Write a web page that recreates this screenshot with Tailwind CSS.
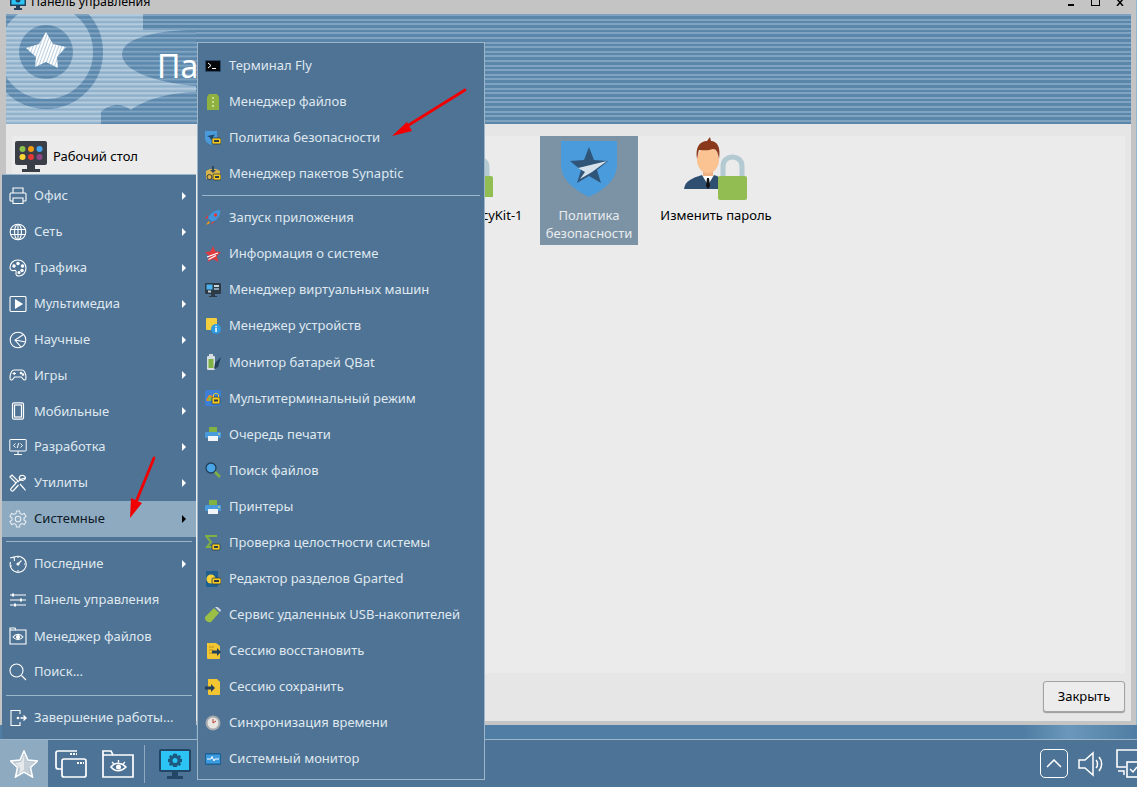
<!DOCTYPE html>
<html lang="ru">
<head>
<meta charset="UTF-8">
<title>Панель управления</title>
<script src="https://cdn.jsdelivr.net/npm/@tailwindcss/browser@4"></script>
</head>
<body class="m-0 overflow-hidden">
<div class="relative w-[1137px] h-[787px] overflow-hidden flex flex-col font-['Noto_Sans',sans-serif] text-[13px] bg-[#4f7da3]">

  <!-- window -->
  <div class="h-[725px] bg-[#c4c4c4] flex flex-col pl-[6px] pr-[5px] pb-[4px] border-r border-[#8fb4cf]">
    <div class="h-[14px] relative -ml-[6px] flex items-end overflow-hidden">
      <div class="flex items-center h-[18px] pl-[10px] gap-[5px] text-[12.4px] text-black leading-[18px] mb-[3px]">
        <svg width="16" height="16" viewBox="0 0 16 16"><rect x="0" y="0" width="16" height="12" fill="#23405c"/><rect x="1.5" y="1.5" width="13" height="9" fill="#2cc3f5"/><circle cx="8" cy="6" r="2.5" fill="#23405c"/><rect x="6" y="12" width="4" height="2" fill="#23405c"/><rect x="4" y="14" width="8" height="2" fill="#23405c"/></svg>
        <span>Панель управления</span>
      </div>
      <div class="ml-auto flex items-end pr-[7px] mb-[8px]">
        <div class="w-[6px] h-[2px] bg-black"></div>
        <div class="w-[9px] h-[9px] border border-black ml-[17px]"></div>
        <svg width="8" height="7" viewBox="0 0 8 7" class="ml-[16px]"><path d="M1 0L7 7M7 0L1 7" stroke="#000" stroke-width="1.5"/></svg>
      </div>
    </div>

    <div class="relative h-[110px] overflow-hidden bg-[repeating-linear-gradient(to_bottom,#7fa3c1_0,#7fa3c1_2px,#5a86a9_2px,#5a86a9_4.6px)]">
      <svg class="absolute inset-0" width="500" height="110" viewBox="0 0 500 110">
        <defs>
          <pattern id="lt" width="4" height="4.6" patternUnits="userSpaceOnUse"><rect width="4" height="4.6" fill="#8fb0cb"/><rect width="4" height="2.2" fill="#b4cbdd"/></pattern>
          <pattern id="dk" width="4" height="4.6" patternUnits="userSpaceOnUse"><rect width="4" height="4.6" fill="#5a87ab"/><rect width="4" height="2" fill="#7fa3c1"/></pattern>
          <pattern id="wh" width="3" height="3" patternUnits="userSpaceOnUse" patternTransform="rotate(20)"><rect width="3" height="3" fill="#fff"/><rect width="0.8" height="3" fill="#a9c3d8"/></pattern>
        </defs>
        <path d="M0 0H137V16H190V110H0Z" fill="url(#lt)"/>
        <circle cx="40" cy="38" r="52" fill="none" stroke="url(#dk)" stroke-width="10"/>
        <circle cx="40" cy="38" r="27" fill="url(#dk)"/>
        <path d="M190 16C145 16 116 26 116 40C116 56 145 68 190 72Z" fill="url(#dk)"/>
        <path d="M95 110V98C105 88 118 90 125 96C140 84 170 78 190 78V110Z" fill="url(#dk)"/>
        <path d="M40 18L47 30L60 33L51 43L52 54L40 48L29 53L30 43L20 34L33 30Z" fill="url(#wh)"/>
      </svg>
      <div class="absolute left-[151px] top-[30px] text-[32px] leading-[44px] text-white">Панель управления</div>
    </div>

    <div class="flex-1 bg-[#e6e6e6] flex flex-col px-[6px] pt-[12px]">
      <div class="h-[537px] bg-[#ebebeb] flex">
        <div class="w-[430px] flex items-start pl-[3px] pt-[5px] gap-[6px] text-black">
          <svg width="32" height="32" viewBox="0 0 32 32" class="shrink-0"><rect width="32" height="24" rx="2" fill="#3a3f47"/><rect x="12" y="24" width="8" height="4" fill="#3a3f47"/><rect x="7" y="28" width="18" height="3" fill="#3a3f47"/><circle cx="7.500" cy="8" r="3" fill="#8bc34a"/><circle cx="16" cy="8" r="3" fill="#f39c12"/><circle cx="24.500" cy="8" r="3" fill="#42a5f5"/><circle cx="7.500" cy="16" r="3" fill="#fdd835"/><circle cx="16" cy="16" r="3" fill="#e53935"/><circle cx="24.500" cy="16" r="3" fill="#8e4585"/></svg>
          <span class="leading-[30px]">Рабочий стол</span>
        </div>
        <div class="w-[98px] h-[109px] flex flex-col items-center pt-[5px] text-black">
          <svg width="56" height="56" viewBox="0 0 56 56"><path d="M6 36V26C6 15 24 15 24 26V36" fill="none" stroke="#b5cad3" stroke-width="5"/><rect x="4" y="35" width="26" height="24" rx="2" fill="#92bd52"/></svg>
          <div class="mt-[9px] leading-[18px]">PolicyKit-1</div>
        </div>
        <div class="w-[98px] h-[109px] flex flex-col items-center pt-[5px] bg-[#7c93a5] text-[#e8ecef]">
          <svg width="56" height="56" viewBox="0 0 56 56"><path d="M0 0H56V24C56 40 40 50 28 56C16 50 0 40 0 24Z" fill="#4a9bdb"/><path d="M28 6L33 19L47 20L36 29L40 42L28 35L16 42L20 29L9 20L23 19Z" fill="#2f5579"/><path d="M46 20L17 27L24 31L19 38L31 31Z" fill="#d5e2ec"/></svg>
          <div class="mt-[9px] leading-[18px] text-center">Политика<br>безопасности</div>
        </div>
        <div class="w-[118px] ml-[19px] flex flex-col items-center pt-[1px] text-black">
          <svg width="64" height="64" viewBox="0 0 64 64" class="mb-[-4px]"><path d="M0 52C1 44 8 41 18 38H30C38 41 42 43 44 52Z" fill="#2f4f70"/><path d="M18 38L24 48L30 38Z" fill="#fff"/><path d="M23 41H25L26 49L24 52L22 49Z" fill="#111"/><rect x="19" y="30" width="10" height="9" fill="#f0b184"/><ellipse cx="24" cy="23" rx="11" ry="13" fill="#fbc391"/><path d="M13 22C11 10 16 4 23 4L26 0L27 4C33 4 37 10 35 22C34 15 32 12 29 12C24 14 18 13 15 13C14 15 14 18 13 22Z" fill="#8a3a1c"/><path d="M39 40V29C39 17 58 17 58 29V40" fill="none" stroke="#b3cad2" stroke-width="5"/><rect x="34" y="39" width="29" height="24" rx="2" fill="#92bd52"/></svg>
          <div class="mt-[9px] leading-[18px]">Изменить пароль</div>
        </div>
      </div>
      <div class="flex justify-end pt-[8px]">
        <button class="w-[82px] h-[31px] rounded-[3px] border border-[#a3a3a3] bg-[#ececec] text-black shadow-[0_1px_1px_#999]">Закрыть</button>
      </div>
    </div>
  </div>

  <!-- desktop strip -->
  <div class="h-[14px] bg-[linear-gradient(to_right,#4f7da3,#4f7da3_90%,#6a97bb_94%,#4f7da3_100%)]"></div>

  <!-- panel -->
  <div class="flex-1 bg-[#4d7396] border-t border-[#9db5c9] flex items-center">
    <div class="w-[48px] h-full bg-[#8eaac1] flex items-center justify-center">
      <svg width="28" height="28" viewBox="0 0 28 28"><path d="M14 1L18 10L27.500 11L20.500 17.500L22.500 27L14 22L5.500 27L7.500 17.500L0.500 11L10 10Z" fill="#b3c4d2" stroke="#fff" stroke-width="1.500"/><path d="M14 5L17 12L23 13L18 18L19 24L14 20L9 24L10 18L5 13L11 12Z" fill="#e6e9eb"/><path d="M14 5L17 12L23 13L18 18L19 24L14 20Z" fill="#c3ced6"/></svg>
    </div>
    <svg width="32" height="28" viewBox="0 0 32 28" class="ml-[7px]"><path d="M22 1H3C2 1 1 2 1 3V17C1 18 2 19 4 19H7" fill="none" stroke="#fff" stroke-width="1.700"/><rect x="7" y="9" width="24" height="18" rx="2" fill="#4d7396" stroke="#fff" stroke-width="1.700"/><path d="M22 13H29M15 4H22" stroke="#fff" stroke-width="1.800" stroke-dasharray="2 1"/></svg>
    <svg width="32" height="28" viewBox="0 0 32 28" class="ml-[15px]"><path d="M1 27V1H9L11 5H31V27Z" fill="none" stroke="#fff" stroke-width="1.700"/><path d="M1 5H11" stroke="#fff" stroke-width="1.500"/><path d="M9 17C13 12 19 12 24 17C19 22 13 22 9 17Z" fill="none" stroke="#fff" stroke-width="1.600"/><circle cx="16.500" cy="17" r="2.500" fill="#fff"/><path d="M10 12L12 14M16.500 10V12.500M23 12L21 14" stroke="#fff" stroke-width="1.300"/></svg>
    <div class="w-px h-[38px] bg-[#8eaac1] ml-[10px]"></div>
    <svg width="32" height="30" viewBox="0 0 32 30" class="ml-[14px]"><rect width="32" height="23" rx="2" fill="#234666"/><rect x="2" y="2" width="28" height="19" fill="#2cc3f5"/><path d="M16 4.500L18 5L18.500 7L20.500 6L22 7.500L21 9.500L23 10V13L21 13.500L22 15.500L20.500 17L18.500 16L18 18H14L13.500 16L11.500 17L10 15.500L11 13.500L9 13V10L11 9.500L10 7.500L11.500 6L13.500 7L14 5Z" fill="#1d5a80"/><circle cx="16" cy="11.500" r="2.500" fill="#2cc3f5"/><rect x="13" y="23" width="6" height="4" fill="#234666"/><rect x="8" y="27" width="16" height="3" fill="#234666"/></svg>
    <div class="ml-auto flex items-center">
      <div class="w-[28px] h-[29px] rounded-[5px] border-[1.5px] border-white flex items-center justify-center">
        <svg width="16" height="9" viewBox="0 0 16 9"><path d="M1 8L8 1L15 8" fill="none" stroke="#fff" stroke-width="1.500"/></svg>
      </div>
      <svg width="26" height="26" viewBox="0 0 26 26" class="ml-[10px]"><path d="M1 9H7L15 2V24L7 17H1Z" fill="none" stroke="#fff" stroke-width="1.500"/><path d="M18 9C20 11 20 15 18 17M21 6C24.500 10 24.500 16 21 20" fill="none" stroke="#fff" stroke-width="1.500"/></svg>
      <svg width="21" height="30" viewBox="0 0 21 30" class="ml-[12px]"><path d="M10 18H1V1H21" fill="none" stroke="#fff" stroke-width="1.600"/><rect x="11" y="13" width="12" height="15" fill="#4d7396" stroke="#fff" stroke-width="1.600"/><path d="M2 22H8V26M14 20L17 23L21 18" fill="none" stroke="#fff" stroke-width="1.500"/></svg>
    </div>
  </div>

  <!-- left menu -->
  <div class="absolute left-[2px] top-[174px] w-[194px] h-[565px] bg-[#4f7394] border-t border-[#9db5c9] pt-[3px] text-[#dfe8f0]">
    <div class="flex items-center h-[35.9px] pl-[7px] pr-[10px]">
      <svg width="18" height="18" viewBox="0 0 18 18" fill="none" stroke="#fff" stroke-width="1.100" class="shrink-0"><path d="M4 6V1H14V6M4 14H1.500C1 14 1 13.500 1 13V7C1 6 1.500 6 2 6H16C17 6 17 6.500 17 7V13C17 13.500 17 14 16.500 14H14M4 11H14V16.500H4Z"/></svg>
      <span class="ml-[7px]">Офис</span>
      <i class="ml-auto w-0 h-0 border-y-[4px] border-l-[4px] border-y-transparent border-l-white"></i>
    </div>
    <div class="flex items-center h-[35.9px] pl-[7px] pr-[10px]">
      <svg width="18" height="18" viewBox="0 0 18 18" fill="none" stroke="#fff" stroke-width="1.100" class="shrink-0"><circle cx="9" cy="9" r="7.800"/><ellipse cx="9" cy="9" rx="3.500" ry="7.800"/><path d="M1.500 6.500H16.500M1.500 11.500H16.500M9 1V17"/></svg>
      <span class="ml-[7px]">Сеть</span>
      <i class="ml-auto w-0 h-0 border-y-[4px] border-l-[4px] border-y-transparent border-l-white"></i>
    </div>
    <div class="flex items-center h-[35.9px] pl-[7px] pr-[10px]">
      <svg width="18" height="18" viewBox="0 0 18 18" fill="none" stroke="#fff" stroke-width="1.100" class="shrink-0"><path d="M9 1C4 1 1 4.500 1 8.500C1 11 3 12 5 11.500C7 11 7.500 12.500 7 14C6.500 16 8 17 10 17C14 17 17 13.500 17 9C17 4.500 13.500 1 9 1Z"/><circle cx="5" cy="7" r="1.200" fill="#fff"/><circle cx="9" cy="4.500" r="1.200" fill="#fff"/><circle cx="13.500" cy="7" r="1.200" fill="#fff"/><circle cx="13" cy="11.500" r="1.200" fill="#fff"/><circle cx="10" cy="13.500" r="1" fill="#fff"/></svg>
      <span class="ml-[7px]">Графика</span>
      <i class="ml-auto w-0 h-0 border-y-[4px] border-l-[4px] border-y-transparent border-l-white"></i>
    </div>
    <div class="flex items-center h-[35.9px] pl-[7px] pr-[10px]">
      <svg width="18" height="18" viewBox="0 0 18 18" fill="none" stroke="#fff" stroke-width="1.100" class="shrink-0"><rect x="1" y="1.500" width="16" height="15" rx="1"/><path d="M6.500 5L13 9L6.500 13Z" fill="#fff"/></svg>
      <span class="ml-[7px]">Мультимедиа</span>
      <i class="ml-auto w-0 h-0 border-y-[4px] border-l-[4px] border-y-transparent border-l-white"></i>
    </div>
    <div class="flex items-center h-[35.9px] pl-[7px] pr-[10px]">
      <svg width="18" height="18" viewBox="0 0 18 18" fill="none" stroke="#fff" stroke-width="1.100" class="shrink-0"><circle cx="9" cy="9" r="7.800"/><path d="M14.500 3.500L6 9L12 16M6 9L16.800 11" /></svg>
      <span class="ml-[7px]">Научные</span>
      <i class="ml-auto w-0 h-0 border-y-[4px] border-l-[4px] border-y-transparent border-l-white"></i>
    </div>
    <div class="flex items-center h-[35.9px] pl-[7px] pr-[10px]">
      <svg width="18" height="18" viewBox="0 0 18 18" fill="none" stroke="#fff" stroke-width="1.100" class="shrink-0"><path d="M5 4H13C15.500 4 17 8 17 12C17 14.500 15 14.500 14 13L12.500 11H5.500L4 13C3 14.500 1 14.500 1 12C1 8 2.500 4 5 4Z"/><path d="M3.500 7.500H7M5.200 6V9" /><circle cx="12" cy="7" r=".8" fill="#fff"/><circle cx="14" cy="8.500" r=".8" fill="#fff"/></svg>
      <span class="ml-[7px]">Игры</span>
      <i class="ml-auto w-0 h-0 border-y-[4px] border-l-[4px] border-y-transparent border-l-white"></i>
    </div>
    <div class="flex items-center h-[35.9px] pl-[7px] pr-[10px]">
      <svg width="18" height="18" viewBox="0 0 18 18" fill="none" stroke="#fff" stroke-width="1.200" class="shrink-0"><rect x="3.500" y=".8" width="11" height="16.400" rx="1.500"/><rect x="5.500" y="3" width="7" height="12"/></svg>
      <span class="ml-[7px]">Мобильные</span>
      <i class="ml-auto w-0 h-0 border-y-[4px] border-l-[4px] border-y-transparent border-l-white"></i>
    </div>
    <div class="flex items-center h-[35.9px] pl-[7px] pr-[10px]">
      <svg width="18" height="18" viewBox="0 0 18 18" fill="none" stroke="#fff" stroke-width="1" class="shrink-0"><rect x=".8" y="1.500" width="16.400" height="11.500" rx=".5"/><path d="M9 13V16.500M5 16.500H13M6.500 5.500L4.500 7.500L6.500 9.500M11.500 5.500L13.500 7.500L11.500 9.500M9.800 5L8.200 10"/></svg>
      <span class="ml-[7px]">Разработка</span>
      <i class="ml-auto w-0 h-0 border-y-[4px] border-l-[4px] border-y-transparent border-l-white"></i>
    </div>
    <div class="flex items-center h-[35.9px] pl-[7px] pr-[10px]">
      <svg width="18" height="18" viewBox="0 0 18 18" fill="none" stroke="#fff" stroke-width="1.200" class="shrink-0"><path d="M1 3L3 1L9 7L7 9ZM7 9L2 14.500C1 16 3 18 4.500 16.500L9.500 11"/><path d="M16.500 4C16 1.500 13 .5 11 2C10 3.500 10.500 5 11 5.500L9 8M11 10L14.500 14L16.500 16.500M11 5.500C13 7 16 6.500 16.500 4Z"/></svg>
      <span class="ml-[7px]">Утилиты</span>
      <i class="ml-auto w-0 h-0 border-y-[4px] border-l-[4px] border-y-transparent border-l-white"></i>
    </div>
    <div class="flex items-center h-[35.9px] pl-[7px] pr-[10px] bg-[#8eaac1] text-[#0d1a26]">
      <svg width="18" height="18" viewBox="0 0 18 18" fill="none" stroke="#e8eef3" stroke-width="1.100" class="shrink-0"><path d="M7.500 1H10.500L11 3.500L13 4.500L15.300 3.500L17 6.300L15 8V10L17 11.700L15.300 14.500L13 13.500L11 14.500L10.500 17H7.500L7 14.500L5 13.500L2.700 14.500L1 11.700L3 10V8L1 6.300L2.700 3.500L5 4.500L7 3.500Z"/><circle cx="9" cy="9" r="2.800"/></svg>
      <span class="ml-[7px]">Системные</span>
      <i class="ml-auto w-0 h-0 border-y-[4px] border-l-[4px] border-y-transparent border-l-black"></i>
    </div>
    <div class="h-px bg-[#9db5c9] mx-[4px] mt-[4px] mb-[4px]"></div>
    <div class="flex items-center h-[36.2px] pl-[7px] pr-[10px]">
      <svg width="18" height="18" viewBox="0 0 18 18" fill="none" stroke="#fff" stroke-width="1.100" class="shrink-0"><path d="M5 2.500A8 8 0 1 1 1.500 7"/><path d="M1 3L5 2L5.500 6"/><path d="M9 9L12.500 5.500"/><circle cx="9" cy="9" r="1" fill="#fff"/><path d="M9 1.500V3M15 9H16.500M9 15V16.500M3 11H1.800" /></svg>
      <span class="ml-[7px]">Последние</span>
      <i class="ml-auto w-0 h-0 border-y-[4px] border-l-[4px] border-y-transparent border-l-white"></i>
    </div>
    <div class="flex items-center h-[36.2px] pl-[7px] pr-[10px]">
      <svg width="18" height="18" viewBox="0 0 18 18" fill="none" stroke="#fff" stroke-width="1.100" class="shrink-0"><path d="M1 4H17M1 9H17M1 14H17"/><path d="M4 2.500V5.500M12 7.500V10.500M6 12.500V15.500" stroke-width="2"/></svg>
      <span class="ml-[7px]">Панель управления</span>
    </div>
    <div class="flex items-center h-[36.2px] pl-[7px] pr-[10px]">
      <svg width="18" height="18" viewBox="0 0 18 18" fill="none" stroke="#fff" stroke-width="1.100" class="shrink-0"><path d="M1 17V1H6L7 3H17V17Z"/><path d="M1 3H7"/><path d="M4 10C7 6.500 11 6.500 14 10C11 13.500 7 13.500 4 10Z"/><circle cx="9" cy="10" r="1.500" fill="#fff"/></svg>
      <span class="ml-[7px]">Менеджер файлов</span>
    </div>
    <div class="flex items-center h-[35.5px] pl-[7px] pr-[10px]">
      <svg width="18" height="18" viewBox="0 0 18 18" fill="none" stroke="#fff" stroke-width="1.100" class="shrink-0"><circle cx="7.500" cy="7.500" r="6.500"/><path d="M12.500 12.500L17 17"/></svg>
      <span class="ml-[7px]">Поиск...</span>
    </div>
    <div class="h-px bg-[#9db5c9] mx-[4px] mt-[5px] mb-[4px]"></div>
    <div class="flex items-center h-[35.9px] pl-[7px] pr-[10px]">
      <svg width="18" height="18" viewBox="0 0 18 18" fill="none" stroke="#fff" stroke-width="1.100" class="shrink-0"><path d="M11 5V1.500H2V16.500H11V13"/><circle cx="9" cy="9" r=".8" fill="#fff"/><path d="M11.500 9H17M14.500 6.500L17 9L14.500 11.500" stroke-width="1.400"/></svg>
      <span class="ml-[7px]">Завершение работы...</span>
    </div>
  </div>

  <!-- system submenu -->
  <div class="absolute left-[197px] top-[42px] w-[288px] h-[738px] bg-[#4f7394] border border-[#9db5c9] pt-[5px] text-[#dfe8f0]">
    <div class="flex items-center h-[36px] pl-[7px]">
      <svg width="16" height="16" viewBox="0 0 16 16" class="shrink-0"><rect y="2" width="16" height="12" rx="1" fill="#2b4a68"/><rect x="1" y="3" width="14" height="10" fill="#06080c"/><path d="M3 5L6 7.500L3 10M7 10.500H11" fill="none" stroke="#fff" stroke-width="1"/></svg>
      <span class="ml-[8px]">Терминал Fly</span>
    </div>
    <div class="flex items-center h-[36px] pl-[7px]">
      <svg width="16" height="16" viewBox="0 0 16 16" class="shrink-0"><path d="M4 0H12L14 3V16H2V3Z" fill="#8fb13f"/><path d="M8 3V5M8 7V9M8 11V13" stroke="#dfe8b0" stroke-width="1.500"/></svg>
      <span class="ml-[8px]">Менеджер файлов</span>
    </div>
    <div class="flex items-center h-[36px] pl-[7px]">
      <svg width="16" height="16" viewBox="0 0 16 16" class="shrink-0"><path d="M0 1H12V8C12 12 8 14 6 15C4 14 0 12 0 8Z" fill="#4a9bdb"/><path d="M2 6L10 4.500L6 10L5 7.500Z" fill="#1f4666"/><rect x="7" y="8" width="9" height="6" rx="1" fill="#f3c91f" stroke="#2d3b47" stroke-width=".8"/><rect x="9" y="10" width="5" height="2" fill="#2d3b47"/></svg>
      <span class="ml-[8px]">Политика безопасности</span>
    </div>
    <div class="flex items-center h-[36px] pl-[7px]">
      <svg width="16" height="16" viewBox="0 0 16 16" class="shrink-0"><path d="M1 5L5 3H11L15 5V13H1Z" fill="#d9b44a"/><path d="M7 0H9V4H11L8 7L5 4H7Z" fill="#34495e"/><circle cx="4.500" cy="11" r="2.500" fill="none" stroke="#3a3a3a"/><rect x="8" y="8" width="8" height="6" rx="1" fill="#f3c91f" stroke="#2d3b47" stroke-width=".8"/><rect x="10" y="10" width="4" height="2" fill="#2d3b47"/></svg>
      <span class="ml-[8px]">Менеджер пакетов Synaptic</span>
    </div>
    <div class="h-px bg-[#9db5c9] mx-[4px] mt-[3px] mb-[4px]"></div>
    <div class="flex items-center h-[36.07px] pl-[7px]">
      <svg width="16" height="16" viewBox="0 0 16 16" class="shrink-0"><path d="M15 0C10 0 5 3 3 8L7 12C12 10 16 6 15 0Z" fill="#3f95dd"/><circle cx="10.500" cy="5" r="1.700" fill="#e53935"/><path d="M3 8L0 9L3 5ZM7 12L6 15L10 11Z" fill="#e53935"/><path d="M3.500 11L1 15L5 13Z" fill="#f39c12"/></svg>
      <span class="ml-[8px]">Запуск приложения</span>
    </div>
    <div class="flex items-center h-[36.07px] pl-[7px]">
      <svg width="16" height="16" viewBox="0 0 16 16" class="shrink-0"><path d="M8 0L10.500 5.500L16 6L11.800 10L13.500 16L8 13L2.500 16L4.200 10L0 6L5.500 5.500Z" fill="#e0393e"/><path d="M2 11L13 7M3.500 13.500L11 9.500" stroke="#fff" stroke-width="1.200"/></svg>
      <span class="ml-[8px]">Информация о системе</span>
    </div>
    <div class="flex items-center h-[36.07px] pl-[7px]">
      <svg width="16" height="16" viewBox="0 0 16 16" class="shrink-0"><rect y="1" width="16" height="11" rx="1" fill="#2d3b47"/><rect x="1.500" y="2.500" width="6" height="5" fill="#4ab3ef"/><rect x="9" y="3" width="5" height="2" fill="#c5d3de"/><rect x="9" y="6" width="5" height="2" fill="#8aa0b2"/><rect x="3" y="8.500" width="3" height="2" fill="#c5d3de"/><rect x="6" y="12" width="4" height="2" fill="#2d3b47"/><rect x="4" y="14" width="8" height="1" fill="#2d3b47"/></svg>
      <span class="ml-[8px]">Менеджер виртуальных машин</span>
    </div>
    <div class="flex items-center h-[36.07px] pl-[7px]">
      <svg width="16" height="16" viewBox="0 0 16 16" class="shrink-0"><rect x="1" y="0" width="11" height="12" rx="1" fill="#f3cf3e"/><circle cx="11" cy="11" r="5" fill="#2f9be0"/><rect x="10.300" y="10" width="1.500" height="4" fill="#fff"/><rect x="10.300" y="7.800" width="1.500" height="1.500" fill="#fff"/></svg>
      <span class="ml-[8px]">Менеджер устройств</span>
    </div>
    <div class="flex items-center h-[36.07px] pl-[7px]">
      <svg width="16" height="16" viewBox="0 0 16 16" class="shrink-0"><rect x="2" y="2" width="8" height="14" rx="1" fill="#d6dde2"/><rect x="4" y="0" width="4" height="2" fill="#d6dde2"/><rect x="3.500" y="5" width="5" height="9" fill="#7fb242"/><path d="M16 3L10 9L9 15L13 13Z" fill="#25405a"/></svg>
      <span class="ml-[8px]">Монитор батарей QBat</span>
    </div>
    <div class="flex items-center h-[36.07px] pl-[7px]">
      <svg width="16" height="16" viewBox="0 0 16 16" class="shrink-0"><rect width="16" height="16" rx="2" fill="#3b7fd6"/><path d="M1 10L4 5L8 6L6 11H2Z" fill="#f08a24"/><circle cx="5" cy="9" r="2" fill="#7fc241"/><rect x="7" y="7" width="8" height="7" rx="1" fill="#f3c91f" stroke="#2d3b47" stroke-width=".8"/><path d="M8.500 7V5C8.500 3 13.500 3 13.500 5V7" fill="none" stroke="#f3c91f"/><rect x="9" y="9.500" width="4" height="2" fill="#2d3b47"/></svg>
      <span class="ml-[8px]">Мультитерминальный режим</span>
    </div>
    <div class="flex items-center h-[36.07px] pl-[7px]">
      <svg width="16" height="16" viewBox="0 0 16 16" class="shrink-0"><path d="M4 1H12V6H4Z" fill="#7fb242"/><rect y="6" width="16" height="6" rx="1" fill="#4a9bdb"/><rect x="3" y="10" width="10" height="5" fill="#f2f5f7"/><rect x="13" y="7.500" width="2" height="1" fill="#f3e26b"/></svg>
      <span class="ml-[8px]">Очередь печати</span>
    </div>
    <div class="flex items-center h-[36.07px] pl-[7px]">
      <svg width="16" height="16" viewBox="0 0 16 16" class="shrink-0"><circle cx="6" cy="6" r="5" fill="#4aa5e6" stroke="#23405c" stroke-width="1.300"/><path d="M10 10L15 15" stroke="#7fb242" stroke-width="2.500"/></svg>
      <span class="ml-[8px]">Поиск файлов</span>
    </div>
    <div class="flex items-center h-[36.07px] pl-[7px]">
      <svg width="16" height="16" viewBox="0 0 16 16" class="shrink-0"><path d="M4 1H12V6H4Z" fill="#7fb242"/><rect y="6" width="16" height="6" rx="1" fill="#4a9bdb"/><rect x="3" y="10" width="10" height="5" fill="#f2f5f7"/><rect x="13" y="7.500" width="2" height="1" fill="#f3e26b"/></svg>
      <span class="ml-[8px]">Принтеры</span>
    </div>
    <div class="flex items-center h-[36.07px] pl-[7px]">
      <svg width="16" height="16" viewBox="0 0 16 16" class="shrink-0"><path d="M12 1H1L6 7L2 12H8" fill="none" stroke="#7fb242" stroke-width="2"/><rect x="7" y="9" width="8" height="6" rx="1" fill="#f3c91f" stroke="#2d3b47" stroke-width=".8"/><rect x="9" y="11" width="4" height="2" fill="#2d3b47"/></svg>
      <span class="ml-[8px]">Проверка целостности системы</span>
    </div>
    <div class="flex items-center h-[36.07px] pl-[7px]">
      <svg width="16" height="16" viewBox="0 0 16 16" class="shrink-0"><rect x="1" y="0" width="12" height="16" rx="1" fill="#1f5f8f"/><circle cx="6" cy="8" r="4.500" fill="#f3d23c"/><rect x="7" y="7" width="9" height="6" rx="1" fill="#f3c91f" stroke="#2d3b47" stroke-width=".8"/><rect x="9" y="9" width="5" height="2" fill="#2d3b47"/></svg>
      <span class="ml-[8px]">Редактор разделов Gparted</span>
    </div>
    <div class="flex items-center h-[36.07px] pl-[7px]">
      <svg width="16" height="16" viewBox="0 0 16 16" class="shrink-0"><path d="M0 10L9 1L14 6L6 15C3 16 -1 13 0 10Z" fill="#9bbf45"/><path d="M10 0L12.500 0L16 3L15 5Z" fill="#d6dde2"/></svg>
      <span class="ml-[8px]">Сервис удаленных USB-накопителей</span>
    </div>
    <div class="flex items-center h-[36.07px] pl-[7px]">
      <svg width="16" height="16" viewBox="0 0 16 16" class="shrink-0"><path d="M2 0H11L15 3V15C15 16 14 16 14 16H3C2 16 2 15 2 15Z" fill="#f3c531"/><path d="M4 4H9M4 7H8M4 10H7" stroke="#b98f1b"/><path d="M7 7.500H12V5L16 9L12 13V10.500H7Z" fill="#25405a"/></svg>
      <span class="ml-[8px]">Сессию восстановить</span>
    </div>
    <div class="flex items-center h-[36.07px] pl-[7px]">
      <svg width="16" height="16" viewBox="0 0 16 16" class="shrink-0"><path d="M3 0H12L15 3V15C15 16 14 16 14 16H4C3 16 3 15 3 15Z" fill="#f3c531"/><path d="M0 7.500H6V5L10 9L6 13V10.500H0Z" fill="#25405a"/></svg>
      <span class="ml-[8px]">Сессию сохранить</span>
    </div>
    <div class="flex items-center h-[36.07px] pl-[7px]">
      <svg width="16" height="16" viewBox="0 0 16 16" class="shrink-0"><circle cx="8" cy="8" r="7.500" fill="#a5a9ad"/><circle cx="8" cy="8" r="5.500" fill="#e8e6e2"/><path d="M8 4V8L11 6" fill="none" stroke="#c0392b"/></svg>
      <span class="ml-[8px]">Синхронизация времени</span>
    </div>
    <div class="flex items-center h-[36.07px] pl-[7px]">
      <svg width="16" height="16" viewBox="0 0 16 16" class="shrink-0"><rect y="2" width="16" height="12" rx="1" fill="#1f5f8f"/><rect x="1" y="3.500" width="14" height="9" fill="#3a9be0"/><path d="M2 8H6L7 5.500L9 10L10 8H14" fill="none" stroke="#fff"/></svg>
      <span class="ml-[8px]">Системный монитор</span>
    </div>
  </div>

  <!-- red arrows -->
  <svg class="absolute inset-0 pointer-events-none" width="1137" height="787" viewBox="0 0 1137 787">
    <path d="M465 90L404 128" stroke="#f00000" stroke-width="2.800" stroke-linecap="round"/>
    <path d="M392 136L407 122L412 131Z" fill="#f00000"/>
    <path d="M154 458L136 502" stroke="#f00000" stroke-width="2.800" stroke-linecap="round"/>
    <path d="M130 518L131 498L142 503Z" fill="#f00000"/>
  </svg>
</div>
</body>
</html>
